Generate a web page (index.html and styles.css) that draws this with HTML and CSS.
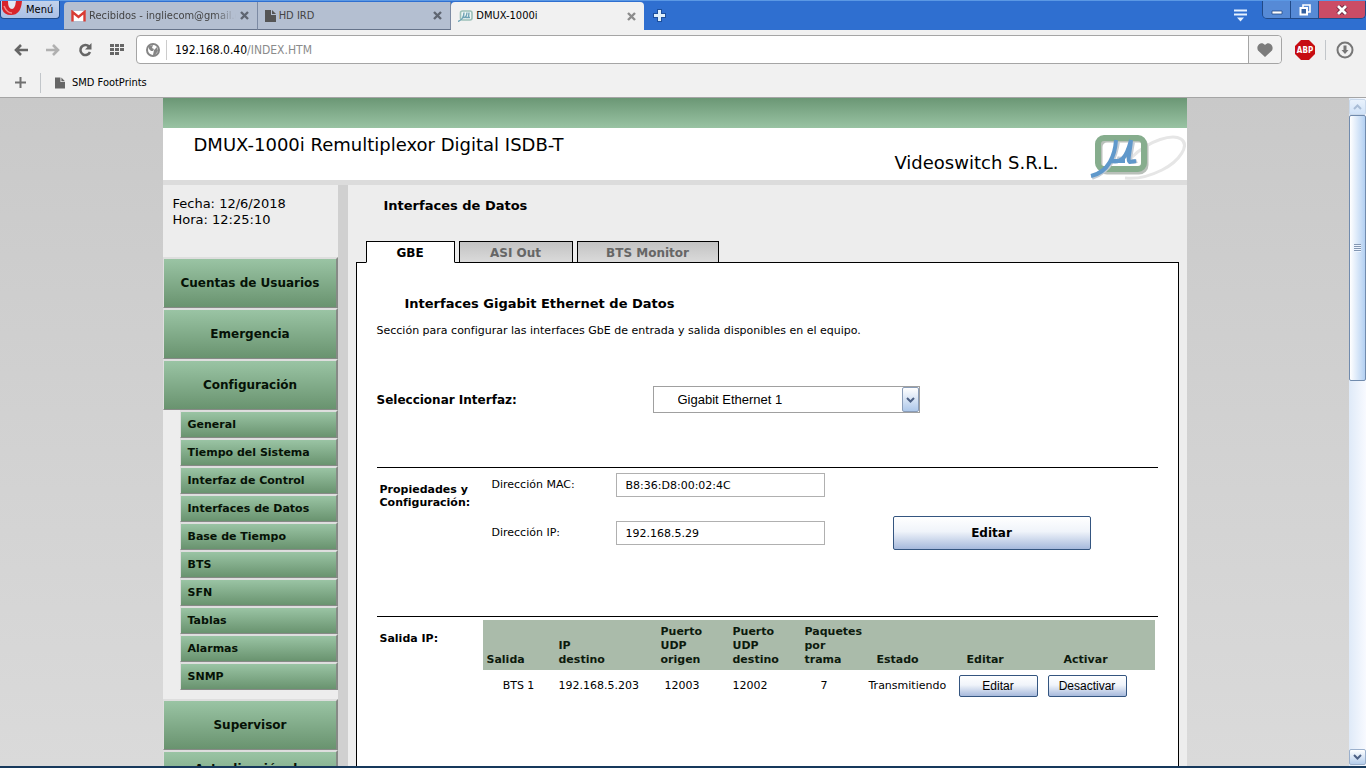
FILE: index.html
```html
<!DOCTYPE html>
<html lang="es">
<head>
<meta charset="utf-8">
<title>DMUX-1000i</title>
<link rel="stylesheet" href="styles.css">
</head>
<body>
<header class="browser">
  <div class="titlebar">
    <button class="menu-btn" type="button">
      <svg width="20" height="17" viewBox="0 0 20 17"><path d="M0 0h20Q19 14 9 14 2 14 0 8z" fill="#d9242b"/><path d="M6 0h8Q13 8 10 8 6 8 6 0z" fill="#e3e8f2"/><path d="M2 5Q5 12 10 12" fill="none" stroke="#f08a88" stroke-width="1.500"/></svg>
      Menú
    </button>
    <div class="tabs">
      <div class="tab">
        <svg width="15" height="12" viewBox="0 0 15 12"><path d="M1 1h13v10H1z" fill="#fff"/><path d="M1.500 11.500V2l6 5 6-5v9.500" fill="none" stroke="#d93c34" stroke-width="2.400"/></svg>
        <span class="tab-title faded">Recibidos - ingliecom@gmail.c</span>
        <button class="close" type="button" aria-label="Cerrar"><svg width="9" height="9" viewBox="0 0 9 9"><path d="M1 1l7 7M8 1L1 8" stroke="#5f6672" stroke-width="2.400"/></svg></button>
      </div>
      <div class="tab">
        <svg width="11" height="12" viewBox="0 0 11 12"><path d="M0 0h6v5h5v7H0zM7 0l4 4H7z" fill="#555"/></svg>
        <span class="tab-title">HD IRD</span>
        <button class="close" type="button" aria-label="Cerrar"><svg width="9" height="9" viewBox="0 0 9 9"><path d="M1 1l7 7M8 1L1 8" stroke="#5f6672" stroke-width="2.400"/></svg></button>
      </div>
      <div class="tab active">
        <svg width="15" height="12" viewBox="0 0 15 12"><rect x="2.500" y="1" width="11.500" height="9" rx="2" fill="#eef6f4" stroke="#9cc0b8" stroke-width="1.600"/><path d="M6 2.500C6 8 4 10 0 11.500M5.500 7.500Q8.500 8 9 2.500M11 2.500L10.500 7.500M7.500 7.500h4.500" fill="none" stroke="#6fa3b5" stroke-width="1.400"/></svg>
        <span class="tab-title">DMUX-1000i</span>
        <button class="close" type="button" aria-label="Cerrar"><svg width="9" height="9" viewBox="0 0 9 9"><path d="M1 1l7 7M8 1L1 8" stroke="#8c8c8c" stroke-width="2.400"/></svg></button>
      </div>
    </div>
    <button class="new-tab" type="button" aria-label="Nueva pestaña"><svg width="13" height="13" viewBox="0 0 13 13"><path d="M6.500 0v13M0 6.500h13" stroke="#1d4f9c" stroke-width="5"/><path d="M6.500 1v11M1 6.500h11" stroke="#dff0fb" stroke-width="3"/></svg></button>
    <button class="tab-menu" type="button" aria-label="Menú de pestañas"><svg width="15" height="13" viewBox="0 0 15 13"><path d="M1 1.500h13M1 5.500h13" stroke="#e6f2ff" stroke-width="2"/><path d="M4 8.500h7l-3.500 4z" fill="#e6f2ff"/></svg></button>
    <div class="window-btns">
      <button type="button" aria-label="Minimizar"><svg width="12" height="12" viewBox="0 0 12 12"><path d="M1 7h10v3H1z" fill="#fff" stroke="#234a86" stroke-width=".8"/></svg></button>
      <button type="button" aria-label="Restaurar"><svg width="12" height="12" viewBox="0 0 12 12"><path d="M4 3V1h7v7H9" fill="none" stroke="#fff" stroke-width="1.600"/><path d="M1.500 4h6.500v6.500H1.500z" fill="#335f9f" stroke="#fff" stroke-width="2"/></svg></button>
      <button class="quit" type="button" aria-label="Cerrar ventana"><svg width="12" height="10" viewBox="0 0 12 10"><path d="M2 1l8 8M10 1L2 9" stroke="#64203a" stroke-width="4.500"/><path d="M2 1l8 8M10 1L2 9" stroke="#fff" stroke-width="2.800"/></svg></button>
    </div>
  </div>
  <div class="toolbar">
    <button type="button" aria-label="Atrás"><svg width="14" height="12" viewBox="0 0 14 12"><path d="M14 6H3M7 1L2 6l5 5" fill="none" stroke="#666" stroke-width="2.600"/></svg></button>
    <button type="button" aria-label="Adelante"><svg width="14" height="12" viewBox="0 0 14 12"><path d="M0 6h11M7 1l5 5-5 5" fill="none" stroke="#b0b0b0" stroke-width="2.600"/></svg></button>
    <button type="button" aria-label="Recargar"><svg width="14" height="14" viewBox="0 0 14 14"><path d="M11 3.500A5 5 0 1 0 12 9" fill="none" stroke="#666" stroke-width="2.600"/><path d="M13.500 0v6.500H7z" fill="#666"/></svg></button>
    <button type="button" aria-label="Acceso rápido"><svg width="14" height="11" viewBox="0 0 14 11"><path d="M0 0h4v3H0zm5 0h4v3H5zm5 0h4v3h-4zM0 4h4v3H0zm5 0h4v3H5zm5 0h4v3h-4zM0 8h4v3H0zm5 0h4v3H5z" fill="#666"/></svg></button>
    <div class="address">
      <svg width="14" height="14" viewBox="0 0 14 14"><circle cx="7" cy="7" r="6" fill="#fff" stroke="#858585" stroke-width="2"/><path d="M3 3l4-1-1 3 2 1-1 2-2 0-2-2zM8 7l3-3 1 4-3 4-2 0z" fill="#858585"/></svg>
      <div class="url"><b>192.168.0.40</b>/INDEX.HTM</div>
      <button class="heart" type="button" aria-label="Favorito"><svg width="16" height="14" viewBox="0 0 16 14"><path d="M8 14L1 7.500C-1.500 3 4-2.500 8 2c4-4.500 9.500 1 7 5.500z" fill="#7c7c7c"/></svg></button>
    </div>
    <button type="button" aria-label="Adblock Plus"><svg width="20" height="20" viewBox="0 0 20 20"><path d="M6 0h8l6 6v8l-6 6H6l-6-6V6z" fill="#c70d12"/><text x="10" y="13" text-anchor="middle" class="abp">ABP</text></svg></button>
    <span class="divider"></span>
    <button type="button" aria-label="Descargas"><svg width="18" height="18" viewBox="0 0 18 18"><circle cx="9" cy="9" r="7.500" fill="none" stroke="#777" stroke-width="2"/><path d="M7.500 4.500h3V9h2L9 13 5.500 9h2z" fill="#777"/></svg></button>
  </div>
  <div class="bookmarks">
    <button type="button" aria-label="Añadir marcador"><svg width="11" height="11" viewBox="0 0 11 11"><path d="M5.500 0v11M0 5.500h11" stroke="#707070" stroke-width="2"/></svg></button>
    <span class="divider"></span>
    <a href="#"><svg width="10" height="12" viewBox="0 0 11 12"><path d="M0 0h6v5h5v7H0zM7 0l4 4H7z" fill="#666"/></svg>SMD FootPrints</a>
  </div>
</header>

<div class="viewport">
  <div class="backdrop">
    <div class="page">
      <div class="green-bar"></div>
      <div class="banner">
        <h1>DMUX-1000i Remultiplexor Digital ISDB-T</h1>
        <span class="company">Videoswitch S.R.L.</span>
        <svg class="logo" width="97" height="48" viewBox="0 0 97 48">
          <path d="M36 46Q53 48 73 38C91 29 101 13 92 7 84 2 61 7 42 26" fill="none" stroke="#e6e6e6" stroke-width="3"/>
          <rect x="11" y="8" width="46" height="32" rx="7" fill="none" stroke="#b9c0ba" stroke-width="5"/>
          <rect x="9" y="6" width="46" height="31" rx="6" fill="none" stroke="#86ad8d" stroke-width="6"/>
          <path d="M29 10C27 22 24 38 3 46M28 26Q37 30 44 11M44 10L41 27Q43 31 48 29" fill="none" stroke="#c5ccd4" stroke-width="4"/>
          <path d="M27 8C26 23 20 40 2 44M22 29C32 31 37 27 42 8M42 8C41 20 38 29 41 30L47 29M24 29h12" fill="none" stroke="#5f98cb" stroke-width="4"/>
        </svg>
      </div>
      <div class="columns">
        <aside class="sidebar">
          <div class="clock">Fecha: 12/6/2018<br>Hora: 12:25:10</div>
          <nav>
            <a class="item" href="#">Cuentas de Usuarios</a>
            <a class="item" href="#">Emergencia</a>
            <a class="item" href="#">Configuración</a>
            <div class="submenu">
              <a href="#">General</a>
              <a href="#">Tiempo del Sistema</a>
              <a href="#">Interfaz de Control</a>
              <a href="#">Interfaces de Datos</a>
              <a href="#">Base de Tiempo</a>
              <a href="#">BTS</a>
              <a href="#">SFN</a>
              <a href="#">Tablas</a>
              <a href="#">Alarmas</a>
              <a href="#">SNMP</a>
            </div>
            <a class="item" href="#">Supervisor</a>
            <a class="item two-line" href="#">Actualización de</a>
          </nav>
        </aside>
        <main>
          <h2>Interfaces de Datos</h2>
          <div class="page-tabs">
            <a class="current gbe" href="#">GBE</a>
            <a class="asi" href="#">ASI Out</a>
            <a class="bts" href="#">BTS Monitor</a>
          </div>
          <section class="panel">
            <h3>Interfaces Gigabit Ethernet de Datos</h3>
            <p>Sección para configurar las interfaces GbE de entrada y salida disponibles en el equipo.</p>
            <div class="choose">
              <label for="iface">Seleccionar Interfaz:</label>
              <div class="select-box">
                <select id="iface"><option>Gigabit Ethernet 1</option></select>
                <span class="arrow"><svg width="9" height="6" viewBox="0 0 9 6"><path d="M1 1l3.500 3.500L8 1" fill="none" stroke="#4d6185" stroke-width="2"/></svg></span>
              </div>
            </div>
            <div class="block props">
              <h4>Propiedades y Configuración:</h4>
              <div class="fields">
                <label for="mac">Dirección MAC:</label><input id="mac" type="text" value="B8:36:D8:00:02:4C">
                <label for="ip">Dirección IP:</label><input id="ip" type="text" value="192.168.5.29">
              </div>
              <button class="xp big" type="button">Editar</button>
            </div>
            <div class="block output">
              <h4>Salida IP:</h4>
              <table>
                <colgroup><col class="c-out"><col class="c-ip"><col class="c-port"><col class="c-port"><col class="c-pack"><col class="c-state"><col class="c-edit"><col></colgroup>
                <thead><tr><th>Salida</th><th>IP<br>destino</th><th>Puerto<br>UDP<br>origen</th><th>Puerto<br>UDP<br>destino</th><th>Paquetes<br>por<br>trama</th><th class="inset">Estado</th><th class="inset">Editar</th><th class="inset-more">Activar</th></tr></thead>
                <tbody><tr><td class="center">BTS 1</td><td>192.168.5.203</td><td class="indent">12003</td><td>12002</td><td class="inset-more">7</td><td>Transmitiendo</td><td><button class="xp" type="button">Editar</button></td><td><button class="xp" type="button">Desactivar</button></td></tr></tbody>
              </table>
            </div>
          </section>
        </main>
      </div>
    </div>
  </div>
  <div class="scrollbar">
    <span class="cap"><svg width="9" height="6" viewBox="0 0 9 6"><path d="M1 5l3.500-3.500L8 5" fill="none" stroke="#a9bdd6" stroke-width="2"/></svg></span>
    <span class="thumb"><i></i></span>
    <span class="cap end"><svg width="9" height="6" viewBox="0 0 9 6"><path d="M1 1l3.500 3.500L8 1" fill="none" stroke="#4d6185" stroke-width="2"/></svg></span>
  </div>
</div>
</body>
</html>
```
FILE: styles.css
```css
* { box-sizing: border-box; }
body {
  margin: 0;
  height: 100vh;
  display: flex;
  flex-direction: column;
  overflow: hidden;
  border-bottom: 2px solid #17395c;
  font: 11px/16px "DejaVu Sans", Verdana, sans-serif;
  color: #000;
}
button { font: inherit; color: inherit; padding: 0; border: 0; background: none; }
svg { display: block; flex: none; }
a { color: inherit; text-decoration: none; }
h1, h2, h3, h4, p { margin: 0; }

/* Browser window */
.browser { flex: none; background: #f1f1f1; border-bottom: 1px solid #a5a5a5; font: 11px/14px "DejaVu Sans Condensed", Tahoma, sans-serif; }
.titlebar { display: flex; height: 30px; background: #2f6fd0; border-top: 1px solid #5b98e4; }
.menu-btn {
  display: flex; gap: 4px; width: 60px; height: 18px; padding-left: 1px; overflow: hidden; line-height: 18px;
  background: linear-gradient(#c3d2ea, #a9c0e6);
  border: 1px solid #1f4c8c; border-top: 0; border-radius: 0 0 4px 4px;
}
.tabs { display: flex; width: 580px; margin-left: 4px; padding-top: 1px; }
.tab { display: flex; flex: 1; align-items: center; gap: 3px; min-width: 0; padding: 0 8px 0 7px; background: #b4bfd1; border-right: 1px solid #7c8aa3; border-bottom: 1px solid #66738a; color: #444; }
.tab:first-child { border-radius: 4px 0 0; }
.tab.active { background: #f1f1f1; border: 0; border-radius: 4px 4px 0 0; color: #000; }
.tab-title { flex: 1; min-width: 0; white-space: nowrap; }
.faded { -webkit-mask-image: linear-gradient(90deg, #000 85%, transparent); mask-image: linear-gradient(90deg, #000 85%, transparent); }
.close { padding-left: 1px; }
.new-tab { margin-left: 9px; }
.tab-menu { margin: 0 14px 0 auto; }
.window-btns { display: flex; height: 18px; border: 1px solid #214a88; border-top: 0; border-radius: 0 0 5px 5px; overflow: hidden; }
.window-btns button { display: grid; place-items: center; width: 28px; background: #568ad6; border-right: 1px solid #214a88; }
.window-btns .quit { width: 46px; background: #cb4c65; border: 0; }
.toolbar { display: flex; align-items: center; gap: 18px; padding: 5px 12px 4px 14px; }
.address { display: flex; align-items: center; flex: 1; height: 29px; padding-left: 9px; background: #fff; border: 1px solid #a5a5a5; border-radius: 4px; margin: 0 -5px 0 -6px; }
.url { flex: 1; margin-left: 6px; padding-left: 8px; border-left: 1px solid #ccc; font-size: 12px; line-height: 20px; color: #8b8b8b; }
.url b { font-weight: 400; color: #000; }
.heart { display: grid; place-items: center; align-self: stretch; width: 33px; background: #f3f3f3; border-left: 1px solid #a5a5a5; border-radius: 0 4px 4px 0; }
.abp { font: bold 8px "DejaVu Sans Condensed", sans-serif; fill: #fff; }
.divider { width: 1px; height: 20px; background: #c2c6ca; }
.toolbar .divider { margin: 0 -8px; }
.bookmarks { display: flex; align-items: center; gap: 14px; height: 29px; padding-left: 15px; }
.bookmarks a { display: flex; align-items: center; gap: 7px; }

/* Scrolling area */
.viewport { display: flex; flex: 1; min-height: 0; }
.backdrop { flex: 1; overflow: hidden; background: linear-gradient(#c9c9c9, #dadada); }
.scrollbar { display: flex; flex-direction: column; width: 17px; padding: 1px 0; background: linear-gradient(90deg, #dfeaf8, #f8faff); }
.cap { display: grid; place-items: center; height: 16px; background: linear-gradient(#e9f2fc, #d0e2f8); border: 1px solid #c9d8ea; border-radius: 2px; }
.cap.end { margin-top: auto; background: linear-gradient(#fff, #b4cdec); border-color: #9bb0cc; }
.thumb { display: grid; place-items: center; flex: 0 0 40%; background: linear-gradient(90deg, #fff, #b3d0f2); border: 1px solid #718bad; border-radius: 2px; }
.thumb i { width: 7px; height: 8px; background: repeating-linear-gradient(#8397b3 0 1px, #eef5ff 1px 2px); }

/* Equipment page */
.page { display: flex; flex-direction: column; max-width: 1024px; min-height: 100%; margin: 0 auto; background: #ededed; }
.green-bar { height: 30px; background: linear-gradient(#6b9775, #99c3a3); }
.banner { display: flex; align-items: flex-start; height: 57px; padding-left: 31px; background: #fff; border-bottom: 5px solid #dcdcdc; }
.banner h1 { flex: 1; padding-top: 5px; font-size: 18px; line-height: 24px; font-weight: 400; }
.company { padding-top: 23px; font-size: 18px; line-height: 24px; }
.logo { margin: 4px 1px 0 30px; }
.columns { display: flex; flex: 1; }
.sidebar { flex: 0 0 185px; border-right: 10px solid #d0d0d0; }
.clock { padding: 11px 10px 0; height: 72px; font-size: 13px; }
.item, .submenu a {
  display: flex; align-items: center;
  background: linear-gradient(#9ac4a4, #69936f);
  border: solid; border-width: 2px 2px 1px 1px; border-color: #dedede #868a86 #868a86 #dedede;
  color: #061206; font-weight: 700;
}
.item { justify-content: center; height: 51px; padding-left: 1px; font-size: 12px; text-align: center; }
.two-line { align-items: flex-start; padding-top: 9px; }
.submenu { margin: 0 0 9px 17px; }
.submenu a { height: 28px; padding-left: 7px; }
main { flex: 1; min-width: 0; display: flex; flex-direction: column; padding: 0 8px; }
main h2 { padding: 11px 28px 0; font-size: 13px; line-height: 20px; }
.page-tabs { display: flex; gap: 4px; margin: 25px 10px -1px; }
.page-tabs a { position: relative; height: 22px; border: 1px solid #000; background: linear-gradient(#c3c3c3, #dadada); font-weight: 700; font-size: 12px; line-height: 22px; text-align: center; color: #666; }
.page-tabs .current { background: #fff; border-bottom-color: #fff; color: #000; }
.gbe { width: 89px; }
.asi { width: 114px; }
.bts { width: 142px; }
.panel { flex: 1; padding: 31px 20px; background: #fff; border: 1px solid #000; }
.panel h3 { padding-left: 28px; font-size: 13px; line-height: 20px; }
.panel p { margin-top: 9px; }
.choose { display: flex; align-items: center; margin: 47px 0 54px; }
.choose label { width: 276px; font-size: 12px; font-weight: 700; }
.select-box { position: relative; width: 267px; }
.select-box select { display: block; width: 100%; height: 27px; padding: 0 24px; appearance: none; background: #fff; border: 1px solid #a0a0a0; border-radius: 0; font: 13px "Liberation Sans", Arial, sans-serif; color: #000; }
.arrow { position: absolute; top: 1px; right: 1px; bottom: 1px; width: 17px; display: grid; place-items: center; pointer-events: none; background: linear-gradient(#fff, #aec8ea); border: 1px solid #8a9db8; border-radius: 2px; }
.block { display: flex; align-items: flex-start; border-top: 1px solid #000; }
.block h4 { padding-left: 3px; line-height: 13px; }
.props { min-height: 149px; padding-top: 5px; }
.props h4 { width: 115px; padding-top: 10px; }
.fields { display: grid; grid-template-columns: 124px 209px; gap: 24px 0; align-items: center; }
.fields input { width: 100%; height: 24px; padding: 0 9px; border: 1px solid #b0b0b0; font: inherit; }
.xp { width: 79px; height: 22px; background: linear-gradient(#fff, #f0f4fa 45%, #a6b9dc); border: 1px solid #345580; border-radius: 2px; font: 12px "Liberation Sans", Arial, sans-serif; }
.xp.big { width: 198px; height: 34px; margin: 43px 0 0 68px; font: bold 12px "DejaVu Sans", Verdana, sans-serif; }
.output { padding-top: 3px; }
.output h4 { width: 106px; padding-top: 12px; }
table { width: 672px; table-layout: fixed; border-collapse: collapse; }
.c-out { width: 72px; }
.c-ip { width: 102px; }
.c-port { width: 72px; }
.c-pack { width: 64px; }
.c-state { width: 90px; }
.c-edit { width: 89px; }
th { height: 50px; padding: 0 0 3px 4px; background: #aabbaa; font-size: 11px; line-height: 14px; text-align: left; vertical-align: bottom; white-space: nowrap; color: #0d1a0d; }
td { height: 32px; padding: 0 0 0 4px; white-space: nowrap; }
td.center { padding: 0; text-align: center; }
td.indent { padding-left: 8px; }
th.inset { padding-left: 12px; }
td.inset-more, th.inset-more { padding-left: 20px; }
```
